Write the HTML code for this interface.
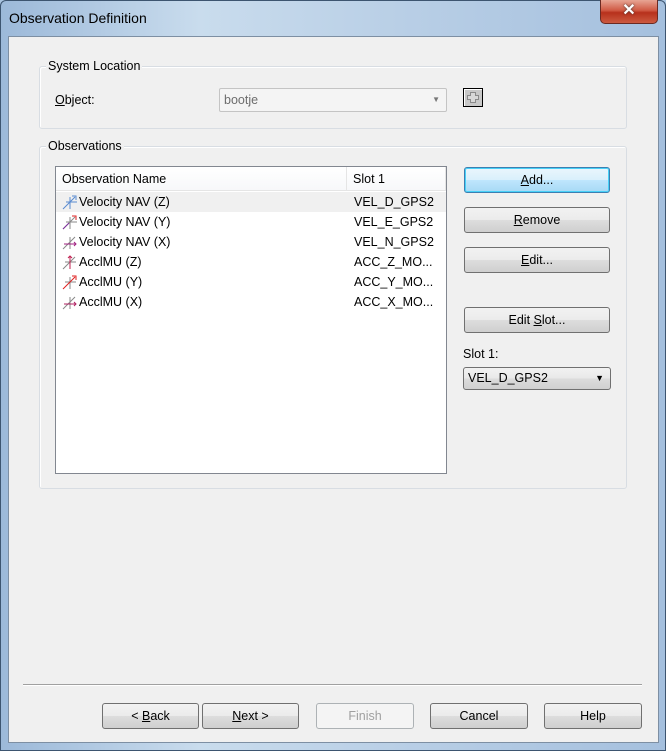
<!DOCTYPE html>
<html><head><meta charset="utf-8"><style>
*{box-sizing:border-box;margin:0;padding:0}
body{width:666px;height:751px;overflow:hidden;font-family:"Liberation Sans",sans-serif;font-size:12.5px;color:#000;background:#a9c4e0;position:relative}
.frame{position:absolute;left:0;top:0;width:666px;height:751px;border-radius:6px 6px 0 0;background:linear-gradient(90deg,#9cb9d9,#c9dced 30%,#b9cfe6 60%,#a5c0de);border:1px solid #3d5570}
.title{position:absolute;left:9px;top:10px;font-size:14px;color:#000}
.close{position:absolute;left:600px;top:0;width:58px;height:24px;border:1px solid #6b2a22;border-top:none;border-radius:0 0 5px 5px;background:linear-gradient(#e7a594,#d05a44 45%,#b7301c 55%,#cc5a40);color:#fff;font-weight:bold;font-size:16px;text-align:center;line-height:22px;text-shadow:0 0 2px #333}
.client{position:absolute;left:8px;top:36px;width:651px;height:707px;background:#f0f0f0;border:1px solid #7d8fa3}
.grp{position:absolute;border:1px solid #d8dde3;border-radius:3px;box-shadow:inset 1px 1px 0 #fff}
.gl{position:absolute;background:#f0f0f0;padding:0 2px;font-size:12.5px}
.abs{position:absolute}
.btn{position:absolute;height:26px;border:1px solid #707070;border-radius:3px;background:linear-gradient(#f2f2f2,#ebebeb 50%,#dddddd 51%,#cfcfcf);text-align:center;line-height:24px;font-size:12.5px}
.btn.def{border-color:#3c7fb1;box-shadow:inset 0 0 0 1px #48d1f8 ;background:linear-gradient(#eaf6fd,#d9f0fc 50%,#bee6fd 51%,#a7d9f5)}
.btn.dis{color:#a0a0a0;border-color:#adb2b5;background:#f4f4f4}
u{text-decoration:underline}
.list{position:absolute;left:55px;top:166px;width:392px;height:308px;background:#fff;border:1px solid #828790}
.hdr{position:absolute;top:0;height:24px;line-height:24px;border-right:1px solid #e5e5e5;background:linear-gradient(#fff,#f7f8fa);border-bottom:1px solid #e5e5e5;padding-left:6px}
.row{position:absolute;left:0;width:390px;height:20px;line-height:20px}
.row .n{position:absolute;left:23px}
.row .s{position:absolute;left:298px}
.row svg{position:absolute;left:6px;top:2px}
</style></head><body>
<div class="frame"></div>
<div class="title">Observation Definition</div>
<div class="close">✕</div>
<div class="client"></div>

<div class="grp" style="left:39px;top:66px;width:588px;height:63px"></div>
<div class="gl" style="left:46px;top:59px">System Location</div>
<div class="abs" style="left:55px;top:93px"><u>O</u>bject:</div>
<div class="abs" style="left:219px;top:88px;width:228px;height:24px;border:1px solid #c4c4c4;border-radius:2px;background:#f4f4f4;color:#6d6d6d;padding-left:4px;line-height:22px">bootje<span style="position:absolute;right:6px;top:0;font-size:8px;color:#777">▼</span></div>
<div class="abs" style="left:463px;top:88px;width:20px;height:19px;border:1px solid #000;background:#c8c8c8;box-shadow:inset 1px 1px 0 #fff"><svg width="18" height="17"><path d="M6.5 3.5h5v3h3v4h-3v3h-5v-3h-3v-4h3z" fill="#d8d8d8" stroke="#8a8a8a"/></svg></div>

<div class="grp" style="left:39px;top:146px;width:588px;height:343px"></div>
<div class="gl" style="left:46px;top:139px">Observations</div>

<div class="list">
 <div class="hdr" style="left:0;width:291px">Observation Name</div>
 <div class="hdr" style="left:291px;width:99px">Slot 1</div>
 <div class="row" style="top:25px;background:#f0f0f0"><svg width="16" height="16"><path d="M1 15L13 3M4 8h11M8 3v12" stroke="#5a8bd0" fill="none"/><path d="M10 2h4v4" stroke="#5a8bd0" fill="none"/></svg><span class="n">Velocity NAV (Z)</span><span class="s">VEL_D_GPS2</span></div>
 <div class="row" style="top:45px"><svg width="16" height="16"><path d="M1 15L13 3M4 8h11M8 3v12" stroke="#888" fill="none"/><path d="M1 15l6-6" stroke="#8030a0"/><path d="M10 2h4v4" stroke="#e02020" fill="none"/></svg><span class="n">Velocity NAV (Y)</span><span class="s">VEL_E_GPS2</span></div>
 <div class="row" style="top:65px"><svg width="16" height="16"><path d="M1 15L13 3M8 3v12" stroke="#888" fill="none"/><path d="M2 10h12M12 8l2 2-2 2" stroke="#a02080" fill="none"/></svg><span class="n">Velocity NAV (X)</span><span class="s">VEL_N_GPS2</span></div>
 <div class="row" style="top:85px"><svg width="16" height="16"><path d="M1 15L13 3M3 8h11" stroke="#888" fill="none"/><path d="M8 15V2M6 4l2-2 2 2" stroke="#c02050" fill="none"/></svg><span class="n">AcclMU (Z)</span><span class="s">ACC_Z_MO...</span></div>
 <div class="row" style="top:105px"><svg width="16" height="16"><path d="M3 8h11M8 3v12" stroke="#888" fill="none"/><path d="M1 15L13 3M10 2h4v4" stroke="#e02020" fill="none"/></svg><span class="n">AcclMU (Y)</span><span class="s">ACC_Y_MO...</span></div>
 <div class="row" style="top:125px"><svg width="16" height="16"><path d="M1 15L13 3M8 3v12" stroke="#888" fill="none"/><path d="M2 10h12M12 8l2 2-2 2" stroke="#b02060" fill="none"/></svg><span class="n">AcclMU (X)</span><span class="s">ACC_X_MO...</span></div>
</div>

<div class="btn def" style="left:464px;top:167px;width:146px"><u>A</u>dd...</div>
<div class="btn" style="left:464px;top:207px;width:146px"><u>R</u>emove</div>
<div class="btn" style="left:464px;top:247px;width:146px"><u>E</u>dit...</div>
<div class="btn" style="left:464px;top:307px;width:146px">Edit <u>S</u>lot...</div>
<div class="abs" style="left:463px;top:347px">Slot 1:</div>
<div class="abs" style="left:463px;top:367px;width:148px;height:23px;border:1px solid #707070;border-radius:3px;background:linear-gradient(#f2f2f2,#e8e8e8 50%,#dcdcdc 51%,#d0d0d0);padding-left:4px;line-height:21px">VEL_D_GPS2<span style="position:absolute;right:6px;top:0;font-size:9px">▼</span></div>

<div class="abs" style="left:23px;top:684px;width:619px;height:1px;background:#a0a0a0;box-shadow:0 1px 0 #fff"></div>
<div class="btn" style="left:102px;top:703px;width:97px">&lt; <u>B</u>ack</div>
<div class="btn" style="left:202px;top:703px;width:97px"><u>N</u>ext &gt;</div>
<div class="btn dis" style="left:316px;top:703px;width:98px">Finish</div>
<div class="btn" style="left:430px;top:703px;width:98px">Cancel</div>
<div class="btn" style="left:544px;top:703px;width:98px">Help</div>
</body></html>
